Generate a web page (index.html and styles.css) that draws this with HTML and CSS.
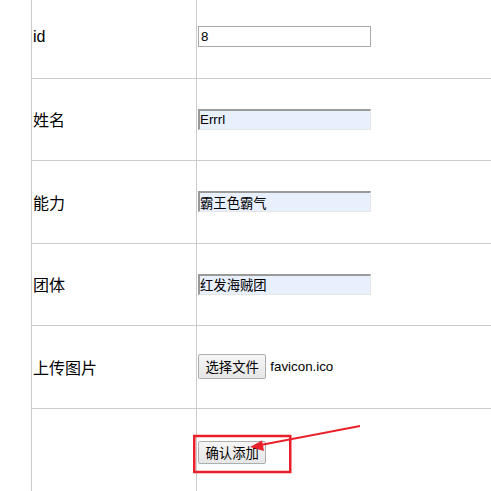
FILE: index.html
```html
<!DOCTYPE html>
<html lang="zh">
<head>
<meta charset="utf-8">
<title>添加</title>
<link rel="stylesheet" href="styles.css">
</head>
<body>
<div class="page">
  <table class="form-table">
    <tr>
      <td class="label">id</td>
      <td class="field"><input class="text-input" type="text" value="8"></td>
    </tr>
    <tr>
      <td class="label">姓名</td>
      <td class="field"><input class="text-input filled" type="text" value="Errrl"></td>
    </tr>
    <tr>
      <td class="label">能力</td>
      <td class="field"><input class="text-input filled" type="text" value="霸王色霸气"></td>
    </tr>
    <tr>
      <td class="label">团体</td>
      <td class="field"><input class="text-input filled" type="text" value="红发海贼团"></td>
    </tr>
    <tr>
      <td class="label">上传图片</td>
      <td class="field">
        <div class="file-row">
          <button class="btn" type="button">选择文件</button>
          <span class="file-name">favicon.ico</span>
        </div>
      </td>
    </tr>
    <tr class="last-row">
      <td class="label"></td>
      <td class="field"><button class="btn submit" type="submit">确认添加</button></td>
    </tr>
  </table>
  <svg class="annotation" width="491" height="491" viewBox="0 0 491 491">
    <rect x="194.25" y="436" width="96" height="36" fill="none" stroke="#e8202a" stroke-width="2.5"/>
    <line x1="360" y1="426" x2="258" y2="445.5" stroke="#e8202a" stroke-width="2"/>
    <polygon points="250,447 262,440.5 264,451" fill="#e8202a"/>
  </svg>
</div>
</body>
</html>
```

FILE: styles.css
```css
html, body {
  margin: 0;
  padding: 0;
  overflow: hidden;
  background: #fff;
}

.page {
  position: relative;
  width: 491px;
  height: 491px;
  overflow: hidden;
}

.form-table {
  margin-top: -5px;
  margin-left: 31px;
  width: 640px;
  border-collapse: collapse;
  font-family: "Liberation Sans", "Noto Sans CJK SC", sans-serif;
  font-size: 16px;
  color: #000;
}

.form-table td {
  border: 1px solid #cccccc;
  padding: 1px;
  height: 79.5px;
  vertical-align: middle;
}

.form-table .last-row td {
  border-bottom: none;
  height: 84px;
}

.form-table td.label {
  width: 162px;
}

.text-input {
  box-sizing: border-box;
  width: 173px;
  height: 21px;
  margin: 0;
  padding: 1px 1px 1px 2px;
  border: 1px solid #a9a9a9;
  background: #fff;
  font-family: "Liberation Sans", "Noto Sans CJK SC", sans-serif;
  font-size: 13.33px;
  color: #000;
  display: block;
  outline: none;
}

.text-input.filled {
  background: #e8f0fe;
  border-style: solid;
  border-width: 2px 1px 1px 2px;
  border-color: #9a9a9a #e6e6e6 #e6e6e6 #9a9a9a;
  padding: 0 1px 0 0;
}

.file-row {
  display: flex;
  align-items: center;
  gap: 4px;
}

.btn {
  box-sizing: border-box;
  height: 25px;
  margin: 0;
  padding: 0 6.5px;
  border: 1px solid #adadad;
  border-radius: 2px;
  background: linear-gradient(#f5f5f5, #e6e6e6);
  font-family: "Liberation Sans", "Noto Sans CJK SC", sans-serif;
  font-size: 13.33px;
  color: #000;
  display: block;
}

.btn.submit {
  height: 23px;
  margin-top: 2px;
}

.file-name {
  font-size: 13.33px;
}

.annotation {
  position: absolute;
  left: 0;
  top: 0;
  pointer-events: none;
}
```
